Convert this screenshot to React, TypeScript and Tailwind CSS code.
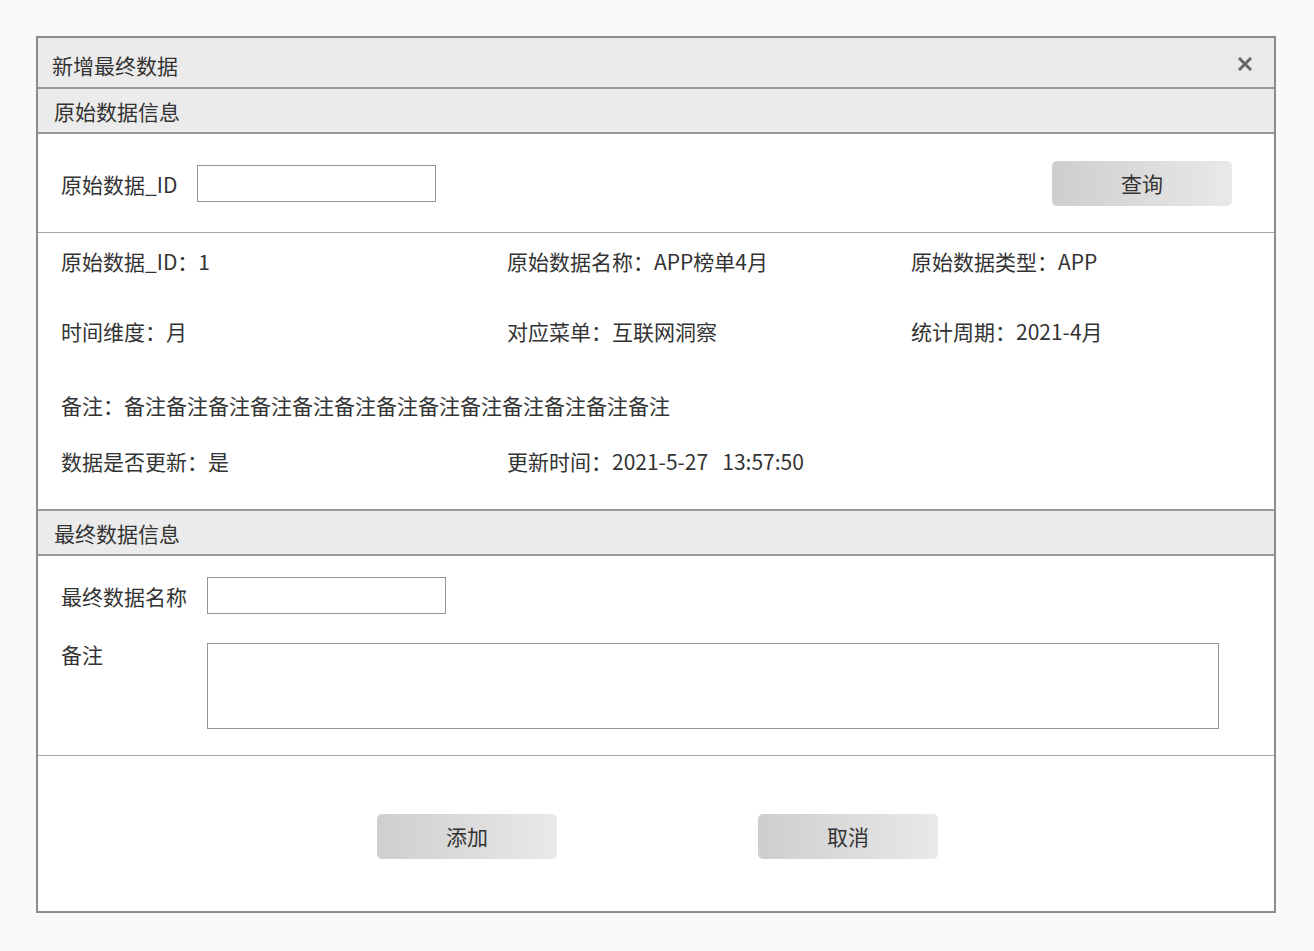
import React from 'react';

const font = { fontFamily: '"Noto Sans CJK SC", "Noto Sans", sans-serif' };

const GrayButton = ({ children }: { children: React.ReactNode }) => (
  <button className="w-[180px] h-[45px] rounded-[5px] bg-gradient-to-r from-[#cecece] to-[#e9e9e9] text-[#333] text-[21px] leading-none">
    {children}
  </button>
);

const SectionHeader = ({ title, top }: { title: string; top?: boolean }) => (
  <div
    className={`h-[45px] bg-[#ebebeb] border-b-2 border-[#999] pl-[16px] flex items-center text-[21px] text-[#333] ${
      top ? 'border-t-2 h-[47px]' : ''
    }`}
  >
    <span className="pt-[3px]">{title}</span>
  </div>
);

const info = [
  ['原始数据_ID：1', '原始数据名称：APP榜单4月', '原始数据类型：APP'],
  ['时间维度：月', '对应菜单：互联网洞察', '统计周期：2021-4月'],
];

const App = () => {
  return (
    <div className="w-[1314px] h-[951px] bg-[#f9f9f9] pt-[36px] pl-[36px]" style={font}>
      <div className="w-[1240px] h-[877px] border-2 border-[#8c8c8c] bg-white flex flex-col text-[#333]">
        {/* title bar */}
        <div className="h-[51px] shrink-0 bg-[#ebebeb] border-b-2 border-[#999] pl-[14px] pr-[22px] flex items-center justify-between">
          <span className="text-[21px] pt-[6px]">新增最终数据</span>
          <svg width="14" height="14" viewBox="0 0 14 14" className="mt-[2px]">
            <path d="M2 2 L12 12 M12 2 L2 12" stroke="#666" strokeWidth="3" strokeLinecap="square" />
          </svg>
        </div>

        <SectionHeader title="原始数据信息" />

        {/* query row */}
        <div className="h-[99px] shrink-0 border-b border-[#a6a6a6] flex items-center pl-[23px] pr-[42px]">
          <span className="w-[136px] text-[21px] pt-[3px]">原始数据_ID</span>
          <input className="w-[239px] h-[37px] border border-[#959595] outline-none" />
          <div className="flex-1" />
          <GrayButton>查询</GrayButton>
        </div>

        {/* original data info */}
        <div className="h-[276px] shrink-0 pl-[23px] pt-[13px] text-[21px]">
          <div className="grid grid-cols-[446px_404px_1fr] h-[30px] leading-[30px]">
            {info[0].map((t) => (
              <span key={t}>{t}</span>
            ))}
          </div>
          <div className="grid grid-cols-[446px_404px_1fr] h-[30px] leading-[30px] mt-[40px]">
            {info[1].map((t) => (
              <span key={t}>{t}</span>
            ))}
          </div>
          <div className="h-[30px] leading-[30px] mt-[44px]">
            备注：备注备注备注备注备注备注备注备注备注备注备注备注备注
          </div>
          <div className="grid grid-cols-[446px_404px_1fr] h-[30px] leading-[30px] mt-[26px]">
            <span>数据是否更新：是</span>
            <span>更新时间：2021-5-27&nbsp;&nbsp;&nbsp;13:57:50</span>
          </div>
        </div>

        <SectionHeader title="最终数据信息" top />

        {/* final data form */}
        <div className="h-[200px] shrink-0 border-b border-[#a6a6a6] pl-[23px] pt-[21px] text-[21px]">
          <div className="flex items-center">
            <span className="w-[146px] pt-[3px]">最终数据名称</span>
            <input className="w-[239px] h-[37px] border border-[#959595] outline-none" />
          </div>
          <div className="flex items-start mt-[29px]">
            <span className="w-[146px] leading-[22px]">备注</span>
            <textarea className="w-[1012px] h-[86px] border border-[#959595] outline-none resize-none" />
          </div>
        </div>

        {/* footer */}
        <div className="flex-1 flex justify-center items-start pt-[58px] gap-[201px] pl-[3px]">
          <GrayButton>添加</GrayButton>
          <GrayButton>取消</GrayButton>
        </div>
      </div>
    </div>
  );
};

export default App;
